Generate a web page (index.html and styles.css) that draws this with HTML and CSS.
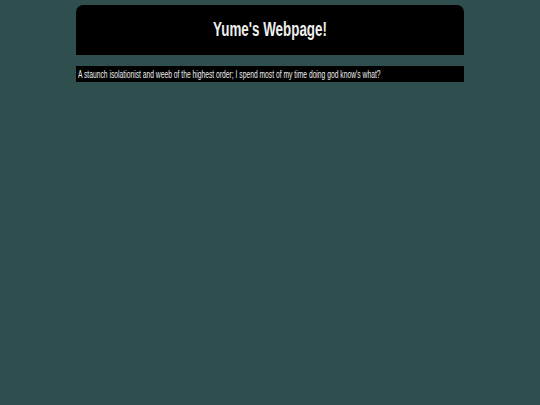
FILE: index.html
```html
<!DOCTYPE html>
<html>
<head>
<meta charset="utf-8">
<link rel="stylesheet" href="styles.css">
</head>
<body>
<div class="page">
  <header class="banner"><h1 class="title">Yume's Webpage!</h1></header>
  <div class="desc"><p class="desc-text">A staunch isolationist and weeb of the highest order; I spend most of my time doing god know's what?</p></div>
</div>
</body>
</html>
```
FILE: styles.css
```css
html, body { margin: 0; padding: 0; }
body { background: #2f4f4f; font-family: "Liberation Sans", Arial, sans-serif; }
.page { width: 388px; margin: 0 auto; padding-top: 5px; }
.banner { background: #000; border-radius: 7px 7px 0 0; height: 50px; display: flex; align-items: center; justify-content: center; }
.title { margin: 0 0 1px; color: #eee; font-size: 20px; font-weight: bold; white-space: nowrap; transform: scaleX(0.67); transform-origin: center; }
.desc { margin-top: 11px; background: #000; height: 16px; padding: 0 2px; overflow: hidden; }
.desc-text { margin: 0; color: #eee; font-size: 11px; line-height: 16px; white-space: nowrap; transform: scaleX(0.612); transform-origin: left center; }
```
